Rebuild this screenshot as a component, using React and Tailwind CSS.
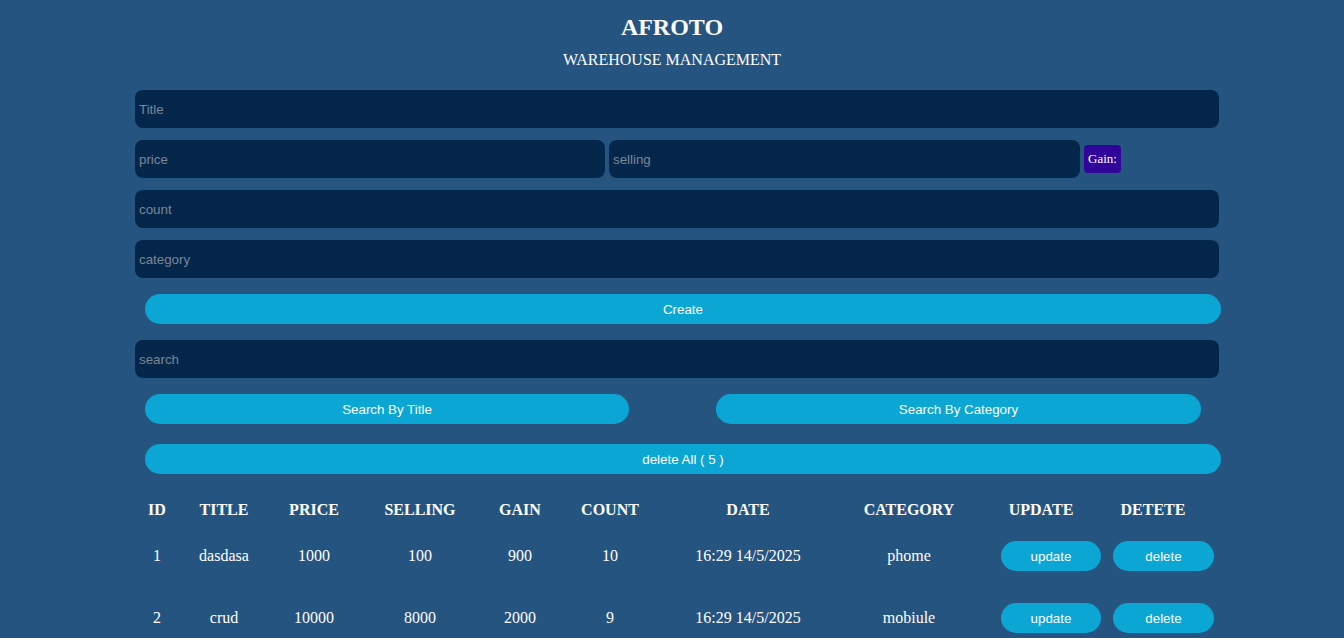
import React from 'react';

const ROWS = [
  { id: 1, title: 'dasdasa', price: 1000, selling: 100, gain: 900, count: 10, date: '16:29 14/5/2025', category: 'phome' },
  { id: 2, title: 'crud', price: 10000, selling: 8000, gain: 2000, count: 9, date: '16:29 14/5/2025', category: 'mobiule' },
];

const HEADS = ['ID', 'TITLE', 'PRICE', 'SELLING', 'GAIN', 'COUNT', 'DATE', 'CATEGORY', 'UPDATE', 'DETETE'];

const cols = 'grid grid-cols-[44px_90px_90px_122px_78px_102px_174px_148px_116px_108px]';
const inputCls =
  'h-[38px] rounded-lg bg-[#04264a] pl-[4px] text-[13.33px] text-white outline-none placeholder:text-[#7b8797] font-["Liberation_Sans",Arial,sans-serif]';
const btnCls =
  'h-[30px] rounded-full bg-[#0ba6d3] pt-[2px] text-[13.33px] text-white font-["Liberation_Sans",Arial,sans-serif]';

export default function App() {
  return (
    <div className='min-h-screen bg-[#255480] text-white font-["Liberation_Serif","Times_New_Roman",serif] overflow-hidden'>
      <div className="pt-[13px] text-center">
        <h2 className="text-[24px] font-bold leading-[28px]">AFROTO</h2>
        <p className="mt-[10px] text-[16px] leading-[18px]">WAREHOUSE MANAGEMENT</p>
      </div>

      <div className="ml-[135px] w-[1084px] mt-[21px] flex flex-col">
        <input className={inputCls} placeholder="Title" />
        <div className="mt-[12px] flex items-center gap-[4px]">
          <input className={inputCls + ' w-[470px]'} placeholder="price" />
          <input className={inputCls + ' w-[471px]'} placeholder="selling" />
          <span className="h-[28px] w-[37px] rounded-[4px] bg-[#31049a] text-[13px] leading-[28px] text-center">Gain:</span>
        </div>
        <input className={inputCls + ' mt-[12px]'} placeholder="count" />
        <input className={inputCls + ' mt-[12px]'} placeholder="category" />
        <button className={btnCls + ' mt-[16px] ml-[10px] w-[1076px]'}>Create</button>
        <input className={inputCls + ' mt-[16px]'} placeholder="search" />
        <div className="mt-[16px] flex">
          <button className={btnCls + ' ml-[10px] w-[484px]'}>Search By Title</button>
          <button className={btnCls + ' ml-[87px] w-[485px]'}>Search By Category</button>
        </div>
        <button className={btnCls + ' mt-[20px] ml-[10px] w-[1076px]'}>delete All ( 5 )</button>

        {/* table */}
        <div className={cols + ' mt-[20px] h-[31px] items-center text-center text-[16px] font-bold'}>
          {HEADS.map((h) => (
            <div key={h}>{h}</div>
          ))}
        </div>
        {ROWS.map((r) => (
          <div key={r.id} className={cols + ' h-[62px] items-center text-center text-[16px]'}>
            <div>{r.id}</div>
            <div>{r.title}</div>
            <div>{r.price}</div>
            <div>{r.selling}</div>
            <div>{r.gain}</div>
            <div>{r.count}</div>
            <div>{r.date}</div>
            <div>{r.category}</div>
            <div className="flex">
              <button className={btnCls + ' ml-[18px] w-[100px] shrink-0'}>update</button>
            </div>
            <div className="flex">
              <button className={btnCls + ' ml-[14px] w-[101px] shrink-0'}>delete</button>
            </div>
          </div>
        ))}
      </div>
    </div>
  );
}
